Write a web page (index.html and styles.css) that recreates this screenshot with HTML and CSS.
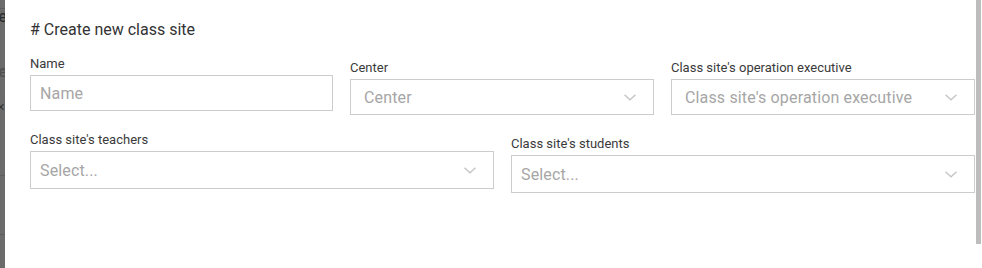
FILE: index.html
```html
<!DOCTYPE html>
<html lang="en">
<head>
    <meta charset="UTF-8">
    <meta name="viewport" content="width=device-width, initial-scale=1.0">
    <title>Create new class site</title>
    <link rel="stylesheet" href="styles.css">
</head>
<body>
    <div class="page">
        <div class="backdrop">
            <div class="bg-row bg-first"><span>Name</span></div>
            <div class="bg-row bg-second"><span class="faded">Type</span></div>
            <div class="bg-row bg-close"><span>&#10005;</span></div>
            <div class="bg-row bg-third"></div>
            <div class="bg-row bg-fourth"></div>
        </div>

        <div class="modal">
            <h1 class="modal-title"># Create new class site</h1>

            <div class="form-row three">
                <div class="form-group">
                    <label for="name">Name</label>
                    <input type="text" id="name" placeholder="Name">
                </div>
                <div class="form-group shifted">
                    <label>Center</label>
                    <div class="select wide-pad">
                        <span class="placeholder">Center</span>
                        <svg class="chevron" width="12" height="7" viewBox="0 0 12 7"><path d="M0.5 0.8l5.5 5l5.5 -5" fill="none" stroke="#c4c4c4" stroke-width="1.3"/></svg>
                    </div>
                </div>
                <div class="form-group shifted">
                    <label>Class site's operation executive</label>
                    <div class="select wide-pad">
                        <span class="placeholder">Class site's operation executive</span>
                        <svg class="chevron" width="12" height="7" viewBox="0 0 12 7"><path d="M0.5 0.8l5.5 5l5.5 -5" fill="none" stroke="#c4c4c4" stroke-width="1.3"/></svg>
                    </div>
                </div>
            </div>

            <div class="form-row two">
                <div class="form-group">
                    <label>Class site's teachers</label>
                    <div class="select tall">
                        <span class="placeholder">Select...</span>
                        <svg class="chevron" width="12" height="7" viewBox="0 0 12 7"><path d="M0.5 0.8l5.5 5l5.5 -5" fill="none" stroke="#c4c4c4" stroke-width="1.3"/></svg>
                    </div>
                </div>
                <div class="form-group shifted">
                    <label>Class site's students</label>
                    <div class="select tall">
                        <span class="placeholder">Select...</span>
                        <svg class="chevron" width="12" height="7" viewBox="0 0 12 7"><path d="M0.5 0.8l5.5 5l5.5 -5" fill="none" stroke="#c4c4c4" stroke-width="1.3"/></svg>
                    </div>
                </div>
            </div>
        </div>

        <div class="scrollbar"></div>
    </div>
</body>
</html>
```

FILE: styles.css
```css
body {
    margin: 0;
    padding: 0;
    font-family: 'Roboto', 'Liberation Sans', sans-serif;
    background-color: #ffffff;
}
.page {
    display: flex;
    height: 268px;
    overflow: hidden;
}
.backdrop {
    width: 5px;
    flex-shrink: 0;
    background-color: #6b6b6b;
    display: flex;
    flex-direction: column;
    overflow: hidden;
}
.bg-row {
    display: flex;
    justify-content: flex-end;
    align-items: center;
    border-bottom: 1px solid #5e5e5e;
    font-size: 16px;
    color: #2a2a2a;
    white-space: nowrap;
}
.bg-row span {
    margin-right: -2px;
}
.bg-row .faded {
    color: #505050;
}
.bg-first {
    height: 61px;
    border-top: 1px solid #5e5e5e;
    margin-top: 8px;
    align-items: flex-start;
}
.bg-second {
    height: 0;
    border: none;
}
.bg-first span {
    margin-top: -2px;
}
.bg-close {
    height: 105px;
    align-items: flex-start;
    padding-top: 30px;
    box-sizing: border-box;
    font-size: 11px;
    color: #333333;
}
.bg-close span {
    margin-right: 0;
}
.bg-third {
    height: 58px;
}
.bg-fourth {
    flex: 1;
    border-bottom: none;
}
.modal {
    flex: 1;
    padding: 20px 0 0 25px;
    box-sizing: border-box;
}
.scrollbar {
    width: 5px;
    height: 244px;
    flex-shrink: 0;
    background-color: #bdbdbd;
    margin-right: 1px;
}
.modal-title {
    margin: 0 0 16px 0;
    font-size: 16px;
    line-height: 20px;
    font-weight: 400;
    color: #333333;
}
.form-row {
    display: grid;
    column-gap: 17px;
    align-items: start;
}
.form-row.three {
    grid-template-columns: 303px 304px 304px;
    margin-bottom: 17px;
}
.form-row.two {
    grid-template-columns: 464px 464px;
}
.form-group label {
    display: block;
    font-size: 13px;
    line-height: 16px;
    color: #3a3a3a;
    margin-bottom: 3px;
}
.form-group.shifted {
    margin-top: 4px;
}
.form-group input {
    display: block;
    width: 100%;
    height: 36px;
    box-sizing: border-box;
    border: 1px solid #cccccc;
    border-radius: 0;
    padding: 0 9px;
    font-family: 'Roboto', 'Liberation Sans', sans-serif;
    font-size: 16px;
    letter-spacing: 0.15px;
    color: #333333;
    outline: none;
}
.form-group input::placeholder {
    color: #a6a6a6;
}
.select {
    display: flex;
    align-items: center;
    justify-content: space-between;
    height: 36px;
    box-sizing: border-box;
    border: 1px solid #cccccc;
    padding: 0 17px 0 9px;
}
.select.wide-pad {
    padding-left: 13px;
}
.select.tall {
    height: 38px;
}
.placeholder {
    font-size: 16px;
    letter-spacing: 0.15px;
    color: #a6a6a6;
    white-space: nowrap;
}
.chevron {
    display: block;
    flex-shrink: 0;
}
```
